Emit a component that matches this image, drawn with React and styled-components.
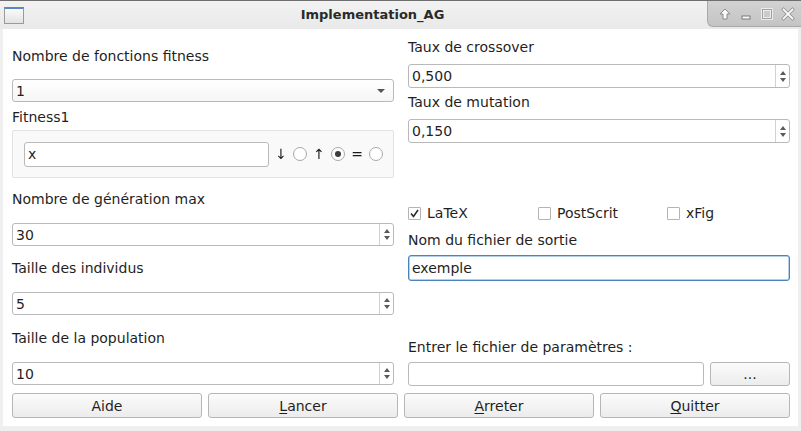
import React from 'react'
import styled, { createGlobalStyle } from 'styled-components'

const Global = createGlobalStyle`
  html, body {
    margin: 0;
    padding: 0;
    background: #efefef;
  }
  body {
    font-family: "DejaVu Sans", "Liberation Sans", sans-serif;
    font-size: 14px;
    color: #1f1f1f;
  }
`

const Window = styled.div`
  width: 801px;
  height: 431px;
  display: flex;
  flex-direction: column;
  background: #efefef;
  overflow: hidden;
`

const TitleBar = styled.div`
  height: 29px;
  flex: none;
  display: flex;
  align-items: flex-start;
  border-top: 1px solid #6e6e6e;
  box-sizing: border-box;
  background: linear-gradient(#f2f2f2, #e9e9e9);
`

const WinIcon = styled.div`
  width: 18px;
  height: 14px;
  margin: 6px 0 0 4px;
  border: 1px solid #9a9a9a;
  border-top: 2px solid #5b86c4;
  background: linear-gradient(#fbfbfb, #e2e2e2);
`

const Title = styled.div`
  flex: 1;
  text-align: center;
  padding-left: 14px;
  font-size: 13px;
  font-weight: bold;
  line-height: 29px;
  margin-top: -1px;
  color: #2a2a2a;
`

const Controls = styled.div`
  width: 94px;
  height: 26px;
  display: flex;
  align-items: center;
  justify-content: space-around;
  padding: 0 2px 0 6px;
  box-sizing: border-box;
  background: linear-gradient(#d2d2d2, #c4c4c4);
  border-left: 1px solid #a9a9a9;
  border-bottom: 1px solid #a9a9a9;
  border-bottom-left-radius: 6px;
`

const Body = styled.div`
  flex: 1;
  margin: 0 3px 5px 3px;
  background: #ffffff;
  padding: 0 8px 0 9px;
  display: flex;
  flex-direction: column;
`

const Columns = styled.div`
  display: grid;
  grid-template-columns: 382px 382px;
  column-gap: 14px;
  align-items: start;
`

const Column = styled.div`
  display: flex;
  flex-direction: column;
  padding-top: ${p => p.$top}px;
`

const Label = styled.div`
  height: 16px;
  line-height: 16px;
  margin-top: ${p => p.$mt || 0}px;
  white-space: nowrap;
`

const boxBase = `
  box-sizing: border-box;
  border: 1px solid #b9b9b9;
  border-radius: 3px;
  background: #fff;
`

const Combo = styled.div`
  ${boxBase}
  height: 23px;
  margin-top: ${p => p.$mt}px;
  display: flex;
  align-items: center;
  justify-content: space-between;
  padding: 0 8px 0 3px;
  background: linear-gradient(#ffffff, #f6f6f6);
`

const DownCaret = styled.span`
  width: 0;
  height: 0;
  border-left: 4px solid transparent;
  border-right: 4px solid transparent;
  border-top: 4px solid #555;
`

const Spin = styled.div`
  ${boxBase}
  height: ${p => p.$h || 23}px;
  margin-top: ${p => p.$mt}px;
  display: flex;
`

const SpinValue = styled.div`
  flex: 1;
  display: flex;
  align-items: center;
  padding-left: 3px;
`

const SpinButtons = styled.div`
  width: 13px;
  border-left: 1px solid #d2d2d2;
  display: flex;
  flex-direction: column;
  align-items: center;
  justify-content: center;
  gap: 3px;
`

const Tri = styled.span`
  width: 0;
  height: 0;
  border-left: 3.5px solid transparent;
  border-right: 3.5px solid transparent;
  ${p => p.$up ? 'border-bottom: 4px solid #5a5a5a;' : 'border-top: 4px solid #5a5a5a;'}
`

const Group = styled.div`
  margin-top: ${p => p.$mt}px;
  height: 48px;
  box-sizing: border-box;
  border: 1px solid #e2e2e2;
  border-radius: 2px;
  background: #f9f9f9;
  display: flex;
  align-items: center;
  padding: 0 10px 0 11px;
`

const LineEdit = styled.div`
  ${boxBase}
  height: ${p => p.$h || 24}px;
  flex: ${p => p.$flex ? 1 : 'none'};
  margin-top: ${p => p.$mt || 0}px;
  display: flex;
  align-items: center;
  padding-left: 3px;
  border-color: ${p => p.$focus ? '#4b84bd' : '#b9b9b9'};
  box-shadow: ${p => p.$focus ? 'inset 0 0 0 0.5px #6b9fd0' : 'none'};
`

const Sym = styled.span`
  display: inline-block;
  width: 24px;
  text-align: center;
  font-family: "DejaVu Sans", sans-serif;
  font-size: 14px;
  color: #1a1a1a;
  will-change: transform;
  transform: translateZ(0);
`

const Radio = styled.span`
  width: 14px;
  height: 14px;
  box-sizing: border-box;
  border: 1px solid #a9a9a9;
  border-radius: 50%;
  background: #fff;
  display: flex;
  align-items: center;
  justify-content: center;
  &::after {
    content: '';
    width: 6px;
    height: 6px;
    border-radius: 50%;
    background: ${p => p.$on ? '#3c3c3c' : 'transparent'};
  }
`

const Checks = styled.div`
  margin-top: ${p => p.$mt}px;
  height: 16px;
  display: grid;
  grid-template-columns: 130px 129px 1fr;
`

const Check = styled.div`
  display: flex;
  align-items: center;
  gap: 6px;
  line-height: 16px;
`

const CheckBox = styled.span`
  width: 13px;
  height: 13px;
  box-sizing: border-box;
  border: 1px solid #b4b4b4;
  border-radius: 1px;
  background: #fff;
  display: flex;
  align-items: center;
  justify-content: center;
`

const FileRow = styled.div`
  margin-top: ${p => p.$mt}px;
  display: flex;
  gap: 6px;
`

const Button = styled.button`
  box-sizing: border-box;
  height: ${p => p.$h || 25}px;
  width: ${p => p.$w ? p.$w + 'px' : 'auto'};
  border: 1px solid #b6b6b6;
  border-radius: 3px;
  background: linear-gradient(#fbfbfb, #ececec);
  font-family: inherit;
  font-size: 14px;
  color: #1f1f1f;
  padding: 0;
  u { text-decoration-thickness: 1px; text-underline-offset: 2px; }
`

const ButtonRow = styled.div`
  margin-top: 7px;
  display: grid;
  grid-template-columns: repeat(4, 1fr);
  gap: 6px;
`

function SpinBox({ value, mt, h }) {
  return (
    <Spin $mt={mt} $h={h}>
      <SpinValue>{value}</SpinValue>
      <SpinButtons>
        <Tri $up />
        <Tri />
      </SpinButtons>
    </Spin>
  )
}

function TitleControls() {
  return (
    <Controls>
      <svg width="14" height="14" viewBox="0 0 14 14">
        <path d="M7 2 L12 7 L9 7 L9 12 L5 12 L5 7 L2 7 Z" fill="#fafafa" stroke="#8a8a8a" strokeWidth="1" />
      </svg>
      <svg width="14" height="14" viewBox="0 0 14 14">
        <rect x="3" y="9" width="8" height="3" fill="#fafafa" stroke="#7a7a7a" strokeWidth="1" />
      </svg>
      <svg width="14" height="14" viewBox="0 0 14 14">
        <rect x="2.5" y="2.5" width="9" height="9" fill="none" stroke="#fafafa" strokeWidth="2.4" />
        <rect x="2.5" y="2.5" width="9" height="9" fill="none" stroke="#8a8a8a" strokeWidth="0.8" />
      </svg>
      <svg width="14" height="14" viewBox="0 0 14 14">
        <path d="M2.5 2.5 L11.5 11.5 M11.5 2.5 L2.5 11.5" stroke="#8a8a8a" strokeWidth="3.2" strokeLinecap="square" />
        <path d="M2.5 2.5 L11.5 11.5 M11.5 2.5 L2.5 11.5" stroke="#fafafa" strokeWidth="1.8" strokeLinecap="square" />
      </svg>
    </Controls>
  )
}

export default function App() {
  return (
    <>
      <Global />
      <Window>
        <TitleBar>
          <WinIcon />
          <Title>Implementation_AG</Title>
          <TitleControls />
        </TitleBar>
        <Body>
          <Columns>
            <Column $top={19}>
              <Label>Nombre de fonctions fitness</Label>
              <Combo $mt={15}>
                <span>1</span>
                <DownCaret />
              </Combo>
              <Label $mt={7}>Fitness1</Label>
              <Group $mt={5}>
                <LineEdit $flex $h={25}>x</LineEdit>
                <Sym>{'\u2193'}</Sym>
                <Radio />
                <Sym>{'\u2191'}</Sym>
                <Radio $on />
                <Sym>=</Sym>
                <Radio />
              </Group>
              <Label $mt={13}>Nombre de génération max</Label>
              <SpinBox value="30" mt={16} />
              <Label $mt={14}>Taille des individus</Label>
              <SpinBox value="5" mt={16} />
              <Label $mt={15}>Taille de la population</Label>
              <SpinBox value="10" mt={16} />
            </Column>
            <Column $top={10}>
              <Label>Taux de crossover</Label>
              <SpinBox value="0,500" mt={9} h={24} />
              <Label $mt={6}>Taux de mutation</Label>
              <SpinBox value="0,150" mt={9} h={24} />
              <Checks $mt={62}>
                <Check>
                  <CheckBox>
                    <svg width="9" height="9" viewBox="0 0 9 9">
                      <path d="M1 4.5 L3.5 7.5 L8 1" fill="none" stroke="#2b2b2b" strokeWidth="1.6" />
                    </svg>
                  </CheckBox>
                  LaTeX
                </Check>
                <Check><CheckBox />PostScrit</Check>
                <Check><CheckBox />xFig</Check>
              </Checks>
              <Label $mt={11}>Nom du fichier de sortie</Label>
              <LineEdit $mt={7} $h={26} $focus>exemple</LineEdit>
              <Label $mt={58}>Entrer le fichier de paramètres :</Label>
              <FileRow $mt={7}>
                <LineEdit $flex $h={24} />
                <Button $w={80} $h={24}>...</Button>
              </FileRow>
            </Column>
          </Columns>
          <ButtonRow>
            <Button>Aide</Button>
            <Button><u>L</u>ancer</Button>
            <Button><u>A</u>rreter</Button>
            <Button><u>Q</u>uitter</Button>
          </ButtonRow>
        </Body>
      </Window>
    </>
  )
}
